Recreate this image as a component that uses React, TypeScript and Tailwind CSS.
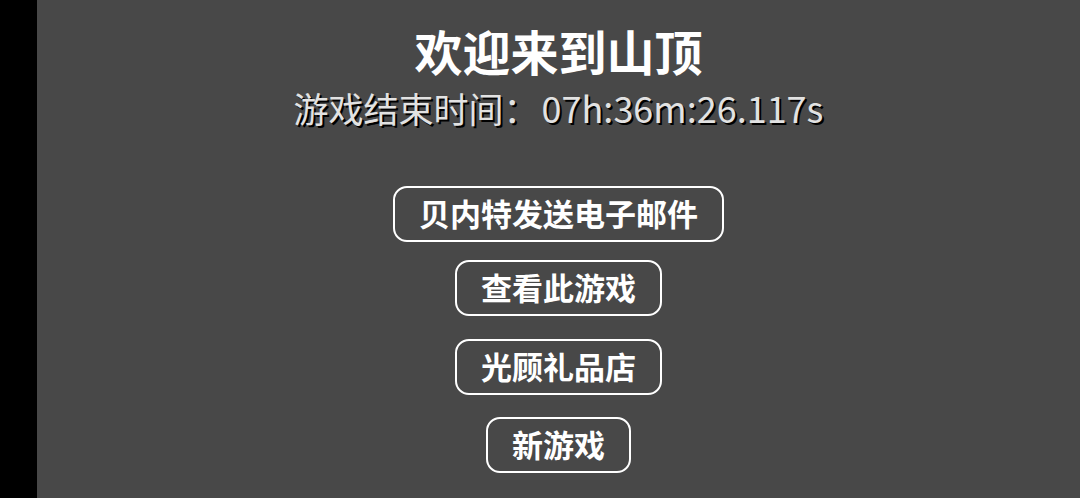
import React from "react";

const FONT = { fontFamily: '"Noto Sans CJK SC", "Noto Sans", sans-serif' };

const buttons = [
  { label: "贝内特发送电子邮件", mt: "mt-0" },
  { label: "查看此游戏", mt: "mt-[18px]" },
  { label: "光顾礼品店", mt: "mt-[23px]" },
  { label: "新游戏", mt: "mt-[22px]" },
];

export default function App() {
  return (
    <div className="flex h-[498px] w-full overflow-hidden" style={FONT}>
      {/* left black strip */}
      <div className="w-[37px] shrink-0 bg-black" />

      <div className="flex flex-1 flex-col items-center bg-[#484848] text-white">
        <h1 className="mt-[26px] text-[48px] font-bold leading-none">欢迎来到山顶</h1>
        <p className="mt-[15px] h-[36px] text-[35px] leading-[36px] text-[#e2e2e2] [text-shadow:2px_2px_0_#000]">
          游戏结束时间：<span className="ml-[3px] text-[36px]">07h:36m:26.117s</span>
        </p>

        <div className="mt-[61px] flex flex-col items-center">
          {buttons.map((b) => (
            <button
              key={b.label}
              className={`${b.mt} flex h-[56px] items-center rounded-[14px] border-2 border-white px-[24px] pb-[4px] text-[31px] font-bold leading-none text-white`}
            >
              {b.label}
            </button>
          ))}
        </div>
      </div>
    </div>
  );
}
